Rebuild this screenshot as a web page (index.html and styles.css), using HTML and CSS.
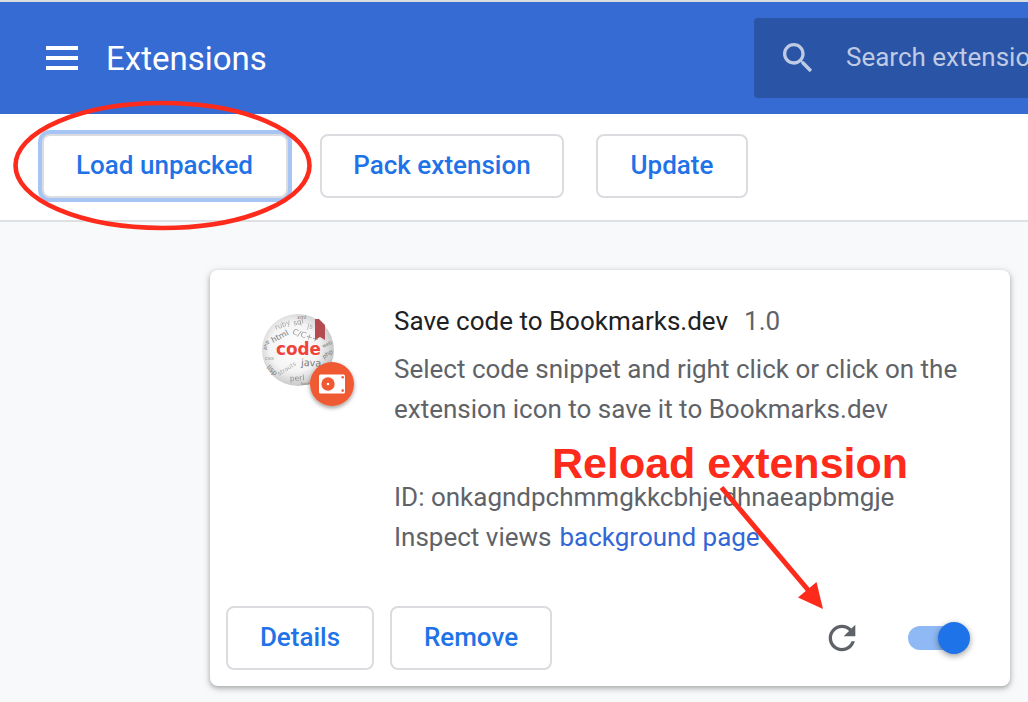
FILE: index.html
```html
<!DOCTYPE html>
<html lang="en">
<head>
<meta charset="utf-8">
<title>Extensions</title>
<link rel="stylesheet" href="styles.css">
</head>
<body>
<header class="header">
  <svg class="menu" viewBox="0 0 32 24" width="32" height="24"><path d="M0 0h32v4H0zM0 10h32v4H0zM0 20h32v4H0z" fill="#fff"/></svg>
  <h1 class="title"><span>Extensions</span></h1>
  <div class="search">
    <svg class="search-icon" viewBox="0 0 24 24" width="40" height="40"><path fill="#bfcbe4" d="M15.5 14h-.79l-.28-.27C15.41 12.59 16 11.11 16 9.5 16 5.91 13.09 3 9.5 3S3 5.91 3 9.5 5.91 16 9.5 16c1.61 0 3.09-.59 4.23-1.57l.27.28v.79l5 4.99L20.49 19l-4.99-5zm-6 0C7.01 14 5 11.99 5 9.5S7.01 5 9.5 5 14 7.01 14 9.5 11.99 14 9.5 14z"/></svg>
    <span class="placeholder">Search extensions</span>
  </div>
</header>
<nav class="toolbar">
  <button class="btn load focused"><span>Load unpacked</span></button>
  <button class="btn pack"><span>Pack extension</span></button>
  <button class="btn update"><span>Update</span></button>
</nav>
<main class="content">
  <article class="card">
    <div class="info">
      <div class="logo">
        <svg viewBox="0 0 100 104" width="100" height="104">
          <defs>
            <radialGradient id="ball" cx="45%" cy="46%" r="57%"><stop offset="0" stop-color="#fff"/><stop offset=".6" stop-color="#f4f4f4"/><stop offset="1" stop-color="#c2c2c2"/></radialGradient>
            <filter id="shade" x="-30%" y="-30%" width="160%" height="160%"><feDropShadow dx="0" dy="2" stdDeviation="2" flood-opacity=".4"/></filter>
          </defs>
          <circle cx="36" cy="36" r="36" fill="url(#ball)"/>
          <g class="words">
            <text transform="translate(14 16) rotate(-22)" font-size="7" opacity=".65">ruby</text>
            <text transform="translate(32 11.500) rotate(-12)" font-size="7" opacity=".8">sql</text>
            <text transform="translate(35 5)" font-size="5">xml</text>
            <text transform="translate(45 14) rotate(10)" font-size="7" opacity=".6">js</text>
            <text transform="translate(11 29) rotate(-28)" font-size="8">html</text>
            <text transform="translate(30 20) rotate(18)" font-size="8" opacity=".8">C/C++</text>
            <text transform="translate(3 46)" font-size="5.500" opacity=".7">css</text>
            <text transform="translate(4 36) rotate(-72)" font-size="5">php</text>
            <text transform="translate(4 54) rotate(42)" font-size="7">lisp</text>
            <text transform="translate(61 34) rotate(-25)" font-size="5">web</text>
            <text transform="translate(62 45) rotate(-35)" font-size="6">php</text>
            <text transform="translate(17 62) rotate(-32)" font-size="6" opacity=".6">strauts</text>
            <text transform="translate(28 67) rotate(-3)" font-size="7.500" opacity=".8">perl</text>
            <text transform="translate(39 70.500)" font-size="4">bash</text>
            <text transform="translate(39 52) rotate(2)" font-size="10" textLength="20" lengthAdjust="spacingAndGlyphs">java</text>
          </g>
          <path d="M53 5h4l6 6v15l-5-3-5 3z" fill="#b34b50"/>
          <text class="code" x="14" y="41" textLength="45" lengthAdjust="spacingAndGlyphs">code</text>
          <circle cx="70" cy="70" r="22" fill="#f05a32" filter="url(#shade)"/>
          <rect x="57" y="60.500" width="26" height="19" rx="1.500" fill="#fff"/>
          <circle cx="66" cy="70" r="6.700" fill="#f05a32"/><circle cx="66" cy="70" r="1.300" fill="#fff"/>
          <circle cx="80.700" cy="63.300" r="1.300" fill="#f05a32"/><circle cx="80.700" cy="76.600" r="1.300" fill="#f05a32"/>
        </svg>
      </div>
      <div class="details">
        <div class="name-row"><span class="name">Save code to Bookmarks.dev</span><span class="version">1.0</span></div>
        <p class="description"><span class="d1">Select code snippet and right click or click on the</span><br><span class="d2">extension icon to save it to Bookmarks.dev</span></p>
        <p class="meta"><span class="id">ID: onkagndpchmmgkkcbhjedhnaeapbmgje</span><br><span class="views">Inspect views</span><a class="link">background page</a></p>
      </div>
    </div>
    <footer class="actions">
      <button class="btn det"><span>Details</span></button>
      <button class="btn rem"><span>Remove</span></button>
      <svg class="reload" viewBox="0 0 24 24" width="40" height="40"><path fill="#5f6368" d="M17.650 6.350C16.200 4.900 14.210 4 12 4c-4.420 0-7.990 3.580-7.990 8s3.570 8 7.990 8c3.730 0 6.840-2.550 7.730-6h-2.080c-.820 2.330-3.040 4-5.650 4-3.310 0-6-2.690-6-6s2.690-6 6-6c1.660 0 3.140.690 4.220 1.780L13 11h7V4l-2.350 2.350z"/></svg>
      <div class="toggle"><div class="knob"></div></div>
    </footer>
  </article>
</main>
<div class="callout">Reload extension</div>
<svg class="marks" viewBox="0 0 1028 702" width="1028" height="702">
  <ellipse cx="162.500" cy="165.500" rx="147" ry="62.500" fill="none" stroke="#fc2b1c" stroke-width="4.600"/>
  <path d="M721.500 487.500L809 591" stroke="#fc2b1c" stroke-width="5" fill="none"/>
  <path d="M823 609l-6.500-27-18.500 15.500z" fill="#fc2b1c"/>
</svg>
</body>
</html>
```
FILE: styles.css
```css
* { box-sizing: border-box; }
body { margin: 0; width: 1028px; height: 702px; overflow: hidden; position: relative; background: #f8f9fa; font-family: Roboto, "Liberation Sans", sans-serif; font-size: 26px; color: #5f6368; }
p, h1 { margin: 0; }
.header { height: 114px; border-top: 2px solid #dadce0; background: #376bd4; display: flex; align-items: center; padding-left: 46px; overflow: hidden; }
.menu { flex: none; }
.title { flex: none; width: 648px; margin-left: 28px; font-size: 33px; font-weight: 400; color: #fff; white-space: nowrap; }
.search { flex: none; width: 320px; height: 80px; border-radius: 4px; background: #2a54a5; display: flex; align-items: center; padding-left: 24px; color: #bfcbe4; }
.placeholder { margin-left: 28px; padding-bottom: 2px; white-space: nowrap; }
.toolbar { height: 108px; padding: 20px 0 0 42px; background: #fff; border-bottom: 2px solid #dfe0e2; display: flex; gap: 32px; align-items: flex-start; }
.btn { flex: none; height: 64px; padding: 0 0 2px; border: 2px solid #dadce0; border-radius: 8px; background: #fff; color: #1f73e8; font: 500 26px Roboto, "Liberation Sans", sans-serif; white-space: nowrap; }
.focused { box-shadow: 0 0 0 4px #a6c5f5; }
.load { width: 246px; padding-right: 1px; }
.pack { width: 244px; }
.update { width: 152px; }
.content { padding: 48px 0 0 210px; }
.card { width: 800px; height: 416px; border-radius: 8px; background: #fff; box-shadow: 0 2px 4px rgba(60,64,67,.3), 0 2px 6px 2px rgba(60,64,67,.15); display: flex; flex-direction: column; }
.info { height: 320px; padding: 32px 0 0 52px; display: flex; }
.logo { width: 132px; padding-top: 12px; }
.words { fill: #777; font-family: "DejaVu Sans", sans-serif; }
.code { fill: #f0433a; font: bold 18px "DejaVu Sans", sans-serif; }
.details { white-space: nowrap; line-height: 40px; }
.name-row { line-height: 38px; }
.name { color: #202124; }
.version { margin-left: 16px; }
.description { margin-top: 9px; }
.meta { margin-top: 48px; }
.link { margin-left: 8px; color: #3367d6; }
.actions { height: 96px; padding: 16px 0 0 16px; display: flex; align-items: flex-start; }
.det { width: 148px; margin-right: 16px; }
.rem { width: 162px; }
.reload { margin: 12px 0 0 270px; }
.toggle { width: 56px; height: 24px; margin: 20px 0 0 46px; border-radius: 12px; background: #8fb9f4; display: flex; align-items: center; justify-content: flex-end; }
.knob { flex: none; width: 32px; height: 32px; margin-right: -6px; border-radius: 50%; background: #1f73e8; box-shadow: 0 2px 6px rgba(0,0,0,.4); }
.callout { position: absolute; left: 552px; top: 439px; font: bold 43px/48px "Liberation Sans", Arial, sans-serif; color: #fc2b1c; white-space: nowrap; }
.marks { position: absolute; left: 0; top: 0; }
```
